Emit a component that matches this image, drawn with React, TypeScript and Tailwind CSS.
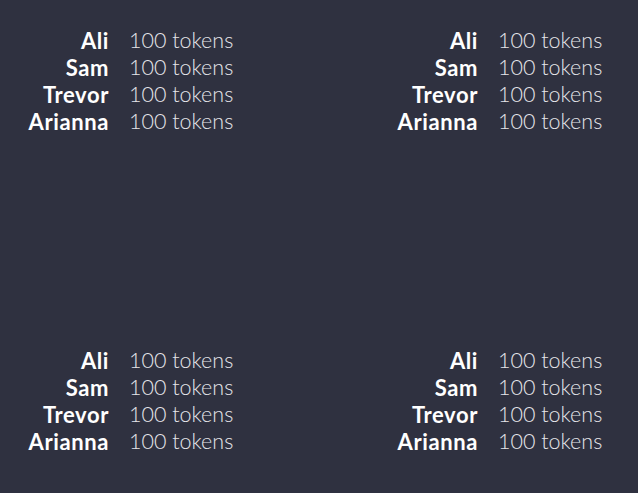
import React from "react";

const rows = ["Ali", "Sam", "Trevor", "Arianna"];

function Balances() {
    return (
        <div className="grid grid-cols-[109px_auto] gap-x-[20px] leading-[27px]">
            {rows.map((name) => (
                <React.Fragment key={name}>
                    <div className="text-right text-[22px] font-bold tracking-[0.6px] text-white">{name}</div>
                    <div className="text-[21.5px] font-light text-[#e6e6ea]">100 tokens</div>
                </React.Fragment>
            ))}
        </div>
    );
}

export default function App() {
    return (
        <div
            className="h-[493px] w-[638px] overflow-hidden bg-[#2f3140] pt-[27px]"
            style={{ fontFamily: '"Lato", "Open Sans", sans-serif' }}
        >
            <div className="grid grid-cols-[369px_1fr] gap-y-[212px]">
                <Balances />
                <Balances />
                <Balances />
                <Balances />
            </div>
        </div>
    );
}
